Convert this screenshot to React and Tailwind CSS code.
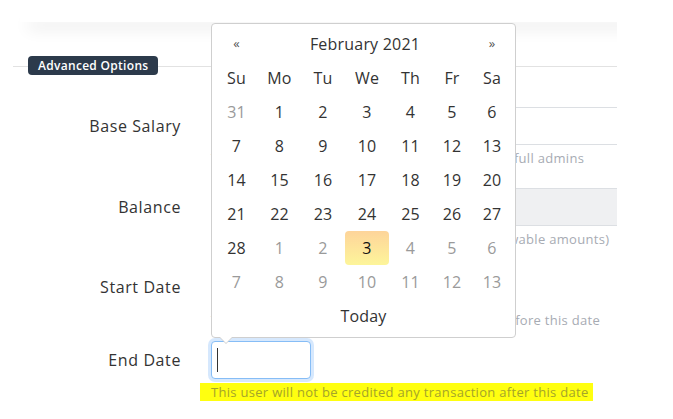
import React from "react";

const weeks = [
  [[31, true], [1], [2], [3], [4], [5], [6]],
  [[7], [8], [9], [10], [11], [12], [13]],
  [[14], [15], [16], [17], [18], [19], [20]],
  [[21], [22], [23], [24], [25], [26], [27]],
  [[28], [1, true], [2, true], [3, true, true], [4, true], [5, true], [6, true]],
  [[7, true], [8, true], [9, true], [10, true], [11, true], [12, true], [13, true]],
];

const dows = ["Su", "Mo", "Tu", "We", "Th", "Fr", "Sa"];

function DatePicker() {
  return (
    <div className="absolute left-[211px] top-[23px] w-[305px] h-[315px] bg-white border border-[#cfcfcf] rounded-[4px] p-[3px]">
      <div className="grid grid-cols-[43px_43px_44px_44px_43px_40px_40px] text-[16px] tracking-[0.2px] text-[#333]">
        {/* header */}
        <div className="h-[34px] flex items-center justify-center text-[13px] text-[#555]">«</div>
        <div className="col-span-5 h-[34px] flex items-center justify-center">February 2021</div>
        <div className="h-[34px] flex items-center justify-center text-[13px] text-[#555]">»</div>

        {dows.map((d) => (
          <div key={d} className="h-[34px] flex items-center justify-center">
            {d}
          </div>
        ))}

        {weeks.map((w, i) =>
          w.map(([n, muted, today], j) => (
            <div
              key={i + "-" + j}
              className={`h-[34px] flex items-center justify-center ${
                today
                  ? "bg-gradient-to-b from-[#fdd49a] to-[#fdf59a] rounded-[4px] text-[#111]"
                  : muted
                  ? "text-[#9a9a9a]"
                  : "text-[#333]"
              }`}
            >
              {n}
            </div>
          ))
        )}

        <div className="col-span-7 h-[34px] flex items-center justify-center">Today</div>
      </div>

      {/* arrow */}
      <div className="absolute left-[7px] bottom-[-7px] w-0 h-0 border-x-[7px] border-t-[7px] border-x-transparent border-t-[#cfcfcf]" />
      <div className="absolute left-[8px] bottom-[-6px] w-0 h-0 border-x-[6px] border-t-[6px] border-x-transparent border-t-white" />
    </div>
  );
}

function Label({ children }) {
  return (
    <div className="w-[181px] shrink-0 text-right h-[38px] leading-[38px] text-[16px] tracking-[0.6px] text-[#333]">
      {children}
    </div>
  );
}

function Hint({ className = "", children }) {
  return (
    <div className={`text-[13px] leading-[16px] tracking-[0.3px] text-[#a7abb3] whitespace-nowrap ${className}`}>
      {children}
    </div>
  );
}

export default function App() {
  return (
    <div className="w-[673px] h-[419px] bg-white overflow-hidden font-['Open_Sans',sans-serif]">
      <div className="relative w-[617px] h-[419px] overflow-hidden">
        {/* bottom edge of the panel above */}
        <div className="h-[22px] w-[640px] ml-[20px] bg-white shadow-[0_14px_16px_-8px_rgba(0,0,0,0.12)]" />

        {/* section divider */}
        <div className="relative mt-[44px] ml-[13px] h-px bg-[#e2e2e2]">
          <span className="absolute left-[15px] top-[-10px] h-[19px] px-[10px] rounded-[4px] bg-[#2c3a4b] text-white text-[12px] font-semibold tracking-[0.3px] leading-[19px] whitespace-nowrap">
            Advanced Options
          </span>
        </div>

        <div className="mt-[40px]">
          {/* Base Salary */}
          <div className="flex items-start">
            <Label>Base Salary</Label>
            <div className="ml-[30px]">
              <div className="h-[38px] w-[420px] border border-[#dcdfe3] rounded-[4px] bg-white" />
              <Hint className="mt-[5px] mb-[22px]">
                This base salary is only visible to managers and full admins
              </Hint>
            </div>
          </div>

          {/* Balance */}
          <div className="flex items-start">
            <Label>Balance</Label>
            <div className="ml-[30px]">
              <div className="h-[38px] w-[420px] border border-[#dcdfe3] rounded-[4px] bg-[#eff0f2]" />
              <Hint className="mt-[5px] mb-[21px]">
                Current balance of a user (including all withdrawable amounts)
              </Hint>
            </div>
          </div>

          {/* Start Date */}
          <div className="flex items-start">
            <Label>Start Date</Label>
            <div className="ml-[30px]">
              <div className="h-[38px] w-[100px] border border-[#dcdfe3] rounded-[4px] bg-white" />
              <Hint className="mt-[6px] mb-[13px]">
                This user will not be credited any transaction before this date
              </Hint>
            </div>
          </div>

          {/* End Date */}
          <div className="flex items-start">
            <Label>End Date</Label>
            <div className="ml-[30px]">
              <div className="h-[38px] w-[100px] border border-[#86bdf6] rounded-[4px] bg-white shadow-[0_0_0_3px_rgba(120,180,250,0.3)] flex items-center pl-[5px]">
                <div className="w-px h-[24px] bg-[#333]" />
              </div>
              <div className="mt-[3px] -ml-[11px] inline-block bg-[#ffff10] pl-[11px] pr-[4px] text-[13px] leading-[18px] tracking-[0.3px] text-[#a4a42a] whitespace-nowrap">
                This user will not be credited any transaction after this date
              </div>
            </div>
          </div>
        </div>

        <DatePicker />
      </div>
    </div>
  );
}
